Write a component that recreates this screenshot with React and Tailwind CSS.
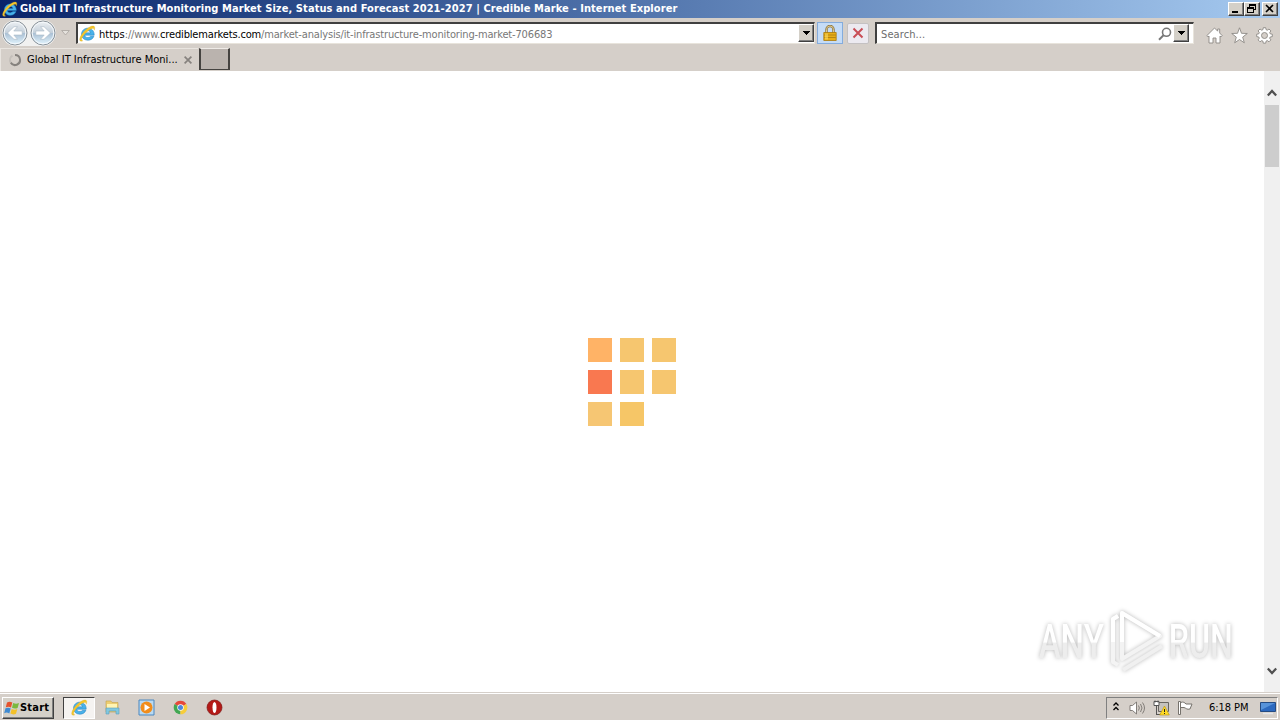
import React from 'react'

const TILES = [
    'bg-[#ffb366]', 'bg-[#f6c66f]', 'bg-[#f6c66f]',
    'bg-[#f97850]', 'bg-[#f6c66f]', 'bg-[#f6c66f]',
    'bg-[#f6c673]', 'bg-[#f6c667]',
]

const RAISED = 'bg-[#d4d0c8] border border-t-white border-l-white border-r-[#404040] border-b-[#404040] shadow-[inset_-1px_-1px_0_#808080]'
const SUNKEN = 'bg-white border-t-2 border-l-2 border-r border-b border-t-[#404040] border-l-[#404040] border-r-[#e8e4dc] border-b-[#e8e4dc]'

const IELogo = ({ className }) => (
    <svg viewBox="0 0 16 16" className={className}>
        <path d="M14.300 9.600H5.400c.2 1.500 1.300 2.200 2.900 2.200 1.100 0 2-.4 2.500-1.200h3.200c-.8 2.300-2.900 3.700-5.600 3.700-3.400 0-6-2.300-6-5.600S4.900 3 8.200 3c3.700 0 6.300 2.700 6.100 6.600zM5.500 7.400h5.400c-.2-1.300-1.200-2-2.700-2s-2.500.7-2.700 2z" fill="#48b2ea" stroke="#1f7fc0" strokeWidth=".5" />
        <path d="M3.600 14.900C1.400 15.800.2 14.900.8 12.600 1.600 9.400 5.700 4.300 9.600 2.200c2.600-1.500 5-1.700 5.200.3.100.8-.2 1.800-.6 2.500.2-1.300-.2-2-1.500-1.800C9.300 3.700 3.300 9.800 2.500 13c-.2 1 .1 1.700 1.100 1.900z" fill="#f5c62c" stroke="#d5ab25" strokeWidth=".3" />
    </svg>
)

const NavButton = ({ flip }) => (
    <svg viewBox="0 0 26 26" className={flip ? 'h-[26px] w-[26px] -scale-x-100' : 'h-[26px] w-[26px]'}>
        <defs>
            <linearGradient id="orb" x1="0" y1="0" x2="0" y2="1">
                <stop offset="0" stopColor="#eef1f4" />
                <stop offset=".5" stopColor="#c3cfda" />
                <stop offset=".52" stopColor="#abc1d5" />
                <stop offset="1" stopColor="#e4f6ff" />
            </linearGradient>
        </defs>
        <circle cx="13" cy="13" r="12" fill="url(#orb)" stroke="#8a9299" />
        <circle cx="13" cy="13" r="10.800" fill="none" stroke="#f5f9fc" />
        <path d="M5.500 13l6.500-6.300h3.500L11.800 11h8.400v4h-8.400l3.700 4.300H12z" fill="#fff" stroke="#a9b8c6" strokeWidth=".6" />
    </svg>
)

const DropButton = () => (
    <div className={`flex h-[18px] w-4 items-center justify-center ${RAISED}`}>
        <svg viewBox="0 0 7 4" className="h-1 w-[7px]" shapeRendering="crispEdges">
            <path d="M0 0h7L3.500 4z" fill="#000" />
        </svg>
    </div>
)

const TitleBar = () => (
    <div className="flex h-[18px] shrink-0 items-center bg-linear-to-r from-[#0a246a] to-[#a6caf0] pr-0.5 pl-0.5">
        <IELogo className="h-4 w-4" />
        <span className="mt-px ml-0.5 text-[11px] font-bold tracking-[0.082px] whitespace-nowrap text-white">
            Global IT Infrastructure Monitoring Market Size, Status and Forecast 2021-2027 | Credible Marke - Internet Explorer
        </span>
        <div className="ml-auto flex">
            <div className={`h-[14px] w-4 ${RAISED}`}>
                <svg viewBox="0 0 14 12" className="h-3 w-[14px]"><path d="M3 8h6v2H3z" /></svg>
            </div>
            <div className={`h-[14px] w-4 ${RAISED}`}>
                <svg viewBox="0 0 14 12" className="h-3 w-[14px]" fill="none" stroke="#000" shapeRendering="crispEdges">
                    <path d="M4.500 4V1.500h6v5H9M4 2h7M2.500 4.500h6v5h-6zM2 5h7" />
                </svg>
            </div>
            <div className={`ml-0.5 h-[14px] w-4 ${RAISED}`}>
                <svg viewBox="0 0 14 12" className="h-3 w-[14px]" stroke="#000" strokeWidth="1.600">
                    <path d="M3 2l7 7M10 2L3 9" />
                </svg>
            </div>
        </div>
    </div>
)

const AddressRow = () => (
    <div className="flex h-[30px] shrink-0 items-center">
        <div className="ml-0.5 flex gap-0.5 rounded-full bg-[#f1f1f0]">
            <NavButton />
            <NavButton flip />
        </div>
        <svg viewBox="0 0 9 6" className="ml-[5px] h-1.5 w-[9px]">
            <path d="M.7.500h7.600L4.500 5z" fill="#e5e2dd" stroke="#a9a59f" strokeWidth=".8" />
        </svg>

        {/* Address field */}
        <div className={`ml-1.5 flex h-[22px] w-[739px] items-start ${SUNKEN}`}>
            <IELogo className="mt-px ml-px h-[17px] w-[17px]" />
            <span className="mt-[3px] ml-[3px] text-[11px] leading-4 tracking-[-0.16px] whitespace-nowrap text-[#777]">
                <span className="tracking-[0.05px] text-black">https</span>://www.<span className="text-black">crediblemarkets.com</span>/market-analysis/it-infrastructure-monitoring-market-706683
            </span>
            <div className="ml-auto">
                <DropButton />
            </div>
        </div>
        <div className="ml-0.5 flex h-[22px] w-[26px] items-center justify-center border border-[#84acdd] bg-[#c5dcf7]">
            <svg viewBox="0 0 14 16" className="h-4 w-[14px]">
                <path d="M3.500 8V4.500a3.500 3.500 0 0 1 7 0V8" fill="none" stroke="#8a7440" strokeWidth="2.400" />
                <path d="M3.500 8V4.500a3.500 3.500 0 0 1 7 0V8" fill="none" stroke="#dfc98c" strokeWidth="1" />
                <path d="M.8 7.500h12.400v8H.8z" fill="#e8ae16" stroke="#a97a0b" strokeWidth=".8" />
                <path d="M1.200 10h11.600M1.200 12.500h11.600" stroke="#b78610" />
                <path d="M2 8.500h3v6H2z" fill="#ffe26c" opacity=".55" />
            </svg>
        </div>
        <div className="ml-1 flex h-[21px] w-[22px] items-center justify-center rounded-[2px] border border-[#c4c1c2] bg-[#eceaf0]">
            <svg viewBox="0 0 12 12" className="h-3 w-3">
                <path d="M1.500 1.500l9 9M10.500 1.500l-9 9" stroke="#c84e56" strokeWidth="2" />
            </svg>
        </div>

        {/* Search field */}
        <div className={`ml-[6px] flex h-[22px] w-[319px] items-start pr-1 ${SUNKEN}`}>
            <span className="mt-[3px] ml-1 text-[11px] leading-4 tracking-[0.1px] text-[#6d6d6d]">Search...</span>
            <svg viewBox="0 0 14 14" className="mt-[3px] ml-auto h-[14px] w-[14px]" fill="none" stroke="#777">
                <circle cx="8.500" cy="5.300" r="4" strokeWidth="1.600" />
                <path d="M5.500 8.300L1 12.700" strokeWidth="2" />
            </svg>
            <div className="ml-px">
                <DropButton />
            </div>
        </div>

        <div className="mt-1 ml-3 flex gap-2">
            <svg viewBox="0 0 17 17" className="h-[17px] w-[17px]" fill="#fff" stroke="#8c8984" strokeWidth=".9" strokeLinejoin="round">
                <path d="M8.500 1L.8 8.700l1.200 1.200 1-.9v7h4v-5h3v5h4V9l1 .9 1.200-1.200L13.700 6V2h-2v2.200z" />
            </svg>
            <svg viewBox="0 0 17 17" className="h-[17px] w-[17px]" fill="#fff" stroke="#8c8984" strokeWidth=".9" strokeLinejoin="round">
                <path d="M8.500.8l2 5.500 5.800.2-4.600 3.600 1.600 5.700-4.800-3.300-4.800 3.300 1.600-5.700L.7 6.500l5.800-.2z" />
            </svg>
            <svg viewBox="0 0 17 17" className="h-[17px] w-[17px]" fill="#fff" stroke="#8c8984" strokeWidth=".9" strokeLinejoin="round">
                <path d="M7.300.7h2.400l.4 2 1.200.5 1.700-1.200 1.900 1.900-1.200 1.700.5 1.200 2.100.4v2.400l-2.100.4-.5 1.200 1.200 1.700-1.900 1.900-1.700-1.200-1.200.5-.4 2.100H7.300l-.4-2.100-1.200-.5L4 14.800l-1.900-1.900 1.200-1.700-.5-1.200-2.100-.4V7.200l2.100-.4.500-1.200-1.200-1.700L4 2l1.700 1.200 1.200-.5z" />
                <circle cx="8.500" cy="8.500" r="3" fill="#d5cfc9" />
            </svg>
        </div>
    </div>
)

const TabRow = () => (
    <div className="flex h-[23px] shrink-0">
        <div className="flex h-full w-[198px] items-center border-t border-l border-[#e9e5e0] pl-[7px]">
            <svg viewBox="0 0 14 14" className="h-[14px] w-[14px]" fill="none" stroke="#86827e" strokeWidth="2">
                <path d="M7 2a5 5 0 1 1-4.300 7.500" />
                <path d="M2.700 9.500A5 5 0 0 1 4.500 2.700" stroke="#c4bfba" />
            </svg>
            <span className="mt-px ml-[5px] w-[152px] text-[11px] whitespace-nowrap text-black">Global IT Infrastructure Moni...</span>
            <svg viewBox="0 0 8 8" className="ml-[5px] h-2 w-2 shrink-0" stroke="#86827e" strokeWidth="1.700">
                <path d="M.6.600l6.800 6.800M7.400.600L.6 7.400" />
            </svg>
        </div>
        <div className="ml-px h-[22px] w-[31px] border border-t-[#efebe7] border-r-2 border-r-[#454340] border-b-[#454340] border-l-2 border-l-[#454340] bg-[#bab3ae]" />
    </div>
)

const Watermark = () => (
    <div className="absolute right-[46px] bottom-[14px] flex h-[72px] w-[196px] items-center justify-between drop-shadow-[0_0_2px_#b8b8b8]">
        <div className="flex h-[60px] w-[66px] items-center justify-center">
            <span className="origin-center scale-x-[0.69] bg-linear-to-b from-white from-50% to-[#ededed] to-52% bg-clip-text font-[Roboto,sans-serif] text-[48px] leading-[60px] font-medium text-transparent">ANY</span>
        </div>
        <svg viewBox="81 0 58 72" className="h-[72px] w-[58px] shrink-0" fill="none" strokeWidth="4" strokeLinejoin="round">
            <path d="M97 64l39-24" stroke="#f0f0f0" />
            <path d="M92 10l-5 3v43l5 3" stroke="#f4f4f4" />
            <path d="M87 36V13l5-3" stroke="#fff" />
            <path d="M96 7v46l38-23z" stroke="#f3f3f3" />
            <path d="M96 36V7l38 23" stroke="#fff" />
        </svg>
        <div className="flex h-[60px] w-[66px] items-center justify-center">
            <span className="origin-center scale-x-[0.67] bg-linear-to-b from-white from-50% to-[#ededed] to-52% bg-clip-text font-[Roboto,sans-serif] text-[48px] leading-[60px] font-medium text-transparent">RUN</span>
        </div>
    </div>
)

const Page = () => (
    <div className="relative flex min-h-0 flex-1 bg-white">
        <div className="flex flex-1 items-center justify-center">
            <div className="grid grid-cols-3 gap-2">
                {TILES.map((color, index) => (
                    <div key={index} className={`h-6 w-6 ${color}`} />
                ))}
            </div>
        </div>

        {/* Scrollbar */}
        <div className="flex w-4 flex-col items-center bg-[#f0f0f0] pt-[18px] pb-[17px]">
            <svg viewBox="0 0 10 8" className="h-2 w-[10px]" fill="none" stroke="#505050" strokeWidth="2.300">
                <path d="M.8 6.500L5 2l4.200 4.500" />
            </svg>
            <div className="mt-2 h-[62px] w-[14px] bg-[#cdcdcd]" />
            <svg viewBox="0 0 10 8" className="mt-auto h-2 w-[10px]" fill="none" stroke="#505050" strokeWidth="2.300">
                <path d="M.8 1.500L5 6l4.200-4.500" />
            </svg>
        </div>
        <Watermark />
    </div>
)

const Taskbar = () => (
    <div className="flex h-7 shrink-0 items-center border-t border-[#d5cfc9] bg-[#d5cfc9] pr-0.5 pl-0.5 shadow-[inset_0_1px_0_#fff]">
        <div className={`mt-0.5 flex h-[22px] w-[52px] items-center pl-px ${RAISED}`}>
            <svg viewBox="0 0 16 16" className="h-4 w-4 shrink-0">
                <path d="M3 2.500c2-1 3.500-.9 5.300.1L7 7.500C5.300 6.500 3.700 6.500 1.800 7.300z" fill="#e5532d" />
                <path d="M9.200 3c2 1 3.600 1 5.800 0l-1.400 4.900c-2 .9-3.700.8-5.600-.1z" fill="#7bb83d" />
                <path d="M1.500 8.300c1.900-.9 3.500-.8 5.200.200L5.300 13.400C3.600 12.400 2 12.300.2 13.200z" fill="#3e8ad2" />
                <path d="M7.700 8.900c1.900.9 3.500 1 5.600.1L12 13.800c-2 .9-3.700.8-5.600-.2z" fill="#f3c129" />
            </svg>
            <span className="mt-px text-[11px] font-bold tracking-[0.2px] text-black">Start</span>
        </div>
        <div className="mt-0.5 ml-[9px] flex h-[22px] w-8 items-center justify-center border border-t-[#404040] border-r-white border-b-white border-l-[#404040] bg-[#f5f3f1]">
            <IELogo className="h-[17px] w-[17px]" />
        </div>
        <div className="mt-0.5 ml-[9px] flex items-center gap-[17px]">
            <svg viewBox="0 0 17 17" className="h-[17px] w-[17px]">
                <path d="M2 2h5l1 1.500h6V13H2z" fill="#edce72" stroke="#c5a24c" strokeWidth=".6" />
                <path d="M3 5h10v5H3z" fill="#fff4b3" />
                <path d="M2 9h13v6h-3v-3H5v3H2z" fill="#81c8df" stroke="#5ca0bd" strokeWidth=".6" />
            </svg>
            <svg viewBox="0 0 17 17" className="h-[17px] w-[17px]">
                <path d="M1 1h15v15H1z" fill="#b9daf2" stroke="#4b87bf" />
                <circle cx="8.500" cy="8.500" r="6" fill="#f18d1b" />
                <path d="M6.500 5v7L12 8.500z" fill="#fff" />
            </svg>
            <svg viewBox="0 0 17 17" className="h-[17px] w-[17px]">
                <path d="M8.500 8.500L2.600 5.100a6.800 6.800 0 0 1 11.800 0z" fill="#e6483a" />
                <path d="M8.500 8.500l-.1 6.800A6.800 6.800 0 0 1 2.600 5.100z" fill="#42a752" />
                <path d="M8.500 8.500l5.900-3.400a6.800 6.800 0 0 1-6 10.200z" fill="#f7cd3a" />
                <circle cx="8.500" cy="8.500" r="3.200" fill="#fff" />
                <circle cx="8.500" cy="8.500" r="2.500" fill="#4d86dc" />
            </svg>
            <svg viewBox="0 0 17 17" className="h-[17px] w-[17px]">
                <circle cx="8.500" cy="8.500" r="7.500" fill="#b41a17" stroke="#7d1715" strokeWidth=".7" />
                <ellipse cx="8.500" cy="8.500" rx="2" ry="5.500" fill="#fff" />
            </svg>
        </div>

        {/* Tray */}
        <div className="mt-0.5 ml-auto flex h-[22px] w-[172px] items-center border border-t-[#808080] border-r-white border-b-white border-l-[#808080] pl-[6px]">
            <svg viewBox="0 0 6 9" className="mb-0.5 h-[9px] w-1.5" fill="none" stroke="#000" strokeWidth="1.300">
                <path d="M.5 3.500L3 1l2.500 2.500M.5 8L3 5.500 5.500 8" />
            </svg>
            <svg viewBox="0 0 17 16" className="ml-2.5 h-4 w-[17px]" fill="#fff" stroke="#77736e" strokeWidth=".9">
                <path d="M1 5.500h2.500L7.500 2v12l-4-3.500H1z" />
                <path d="M9.500 5.500q1.700 2.500 0 5M11.500 4q3 4 0 8M13.500 2.500q4 5.500 0 11" fill="none" />
            </svg>
            <svg viewBox="0 0 17 16" className="ml-[7px] h-4 w-[17px]">
                <path d="M5.500 2.500h10v9h-10z" fill="#c5c2be" stroke="#686560" />
                <path d="M1 1.500h5v4H1zM3.500 5.500v9M2 .500v2M5 .500v2M3 14.500h5" fill="#fff" stroke="#555" />
                <path d="M11.500 6l4.800 9H6.700z" fill="#ffdb25" stroke="#ba920e" strokeWidth=".6" />
                <path d="M11.500 9v3M11.500 13v1" stroke="#222" />
            </svg>
            <svg viewBox="0 0 17 16" className="ml-[7px] h-4 w-[17px]" fill="#fff" stroke="#76726c">
                <path d="M1.500 1.500h2v13h-2zM3.500 2.500c3-1 4 0 5.500 1.500h6l-2 5c-3 1-4-1-6-1.500H3.500z" />
            </svg>
            <span className="mt-px ml-[15px] text-[11px] tracking-[-0.05px] whitespace-nowrap text-black">6:18 PM</span>
            <svg viewBox="0 0 16 14" className="mr-px ml-auto h-[14px] w-4">
                <path d="M.5 1.500h15v9H.5z" fill="#2c69bf" stroke="#244b83" />
                <path d="M1 2h14L1 9z" fill="#5793da" />
                <path d="M3 12.500h10" stroke="#e4e6ea" strokeWidth="1.500" />
            </svg>
        </div>
    </div>
)

const App = () => {
    return (
        <div className="flex h-[720px] w-[1280px] flex-col overflow-hidden bg-[#d5cfc9] font-['DejaVu_Sans_Condensed','DejaVu_Sans',sans-serif]">
            <TitleBar />
            <AddressRow />
            <TabRow />
            <Page />
            <Taskbar />
        </div>
    )
}

export default App
